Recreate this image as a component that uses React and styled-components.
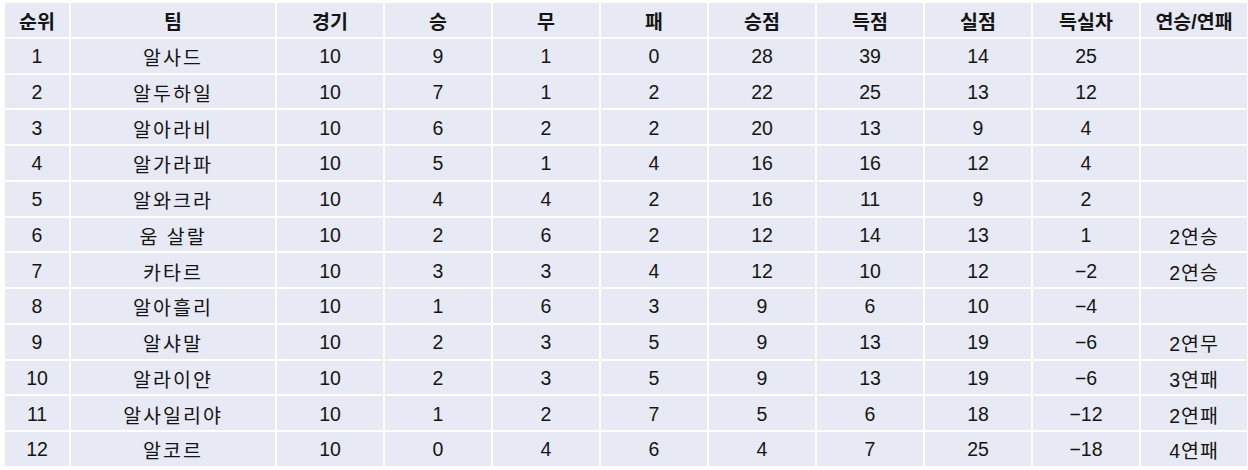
import React from "react";
import styled, { createGlobalStyle } from "styled-components";

const GlobalStyle = createGlobalStyle`
  html, body {
    margin: 0;
    padding: 0;
    background: #ffffff;
  }
`;

const Page = styled.div`
  padding: 3px 0 0 5px;
  font-family: "Liberation Sans", Arial, "Noto Sans CJK KR", sans-serif;
  color: #151515;
`;

const Standings = styled.div`
  display: grid;
  grid-template-columns: 64px 204px repeat(9, 106px);
  grid-auto-rows: 33.75px;
  gap: 2px;
`;

const Cell = styled.div`
  display: flex;
  align-items: center;
  justify-content: center;
  background: #e7e9f4;
  font-size: 19.5px;
  font-weight: ${(p) => (p.$head ? 700 : 400)};
  padding-top: 2px;
  white-space: nowrap;
`;

const Hangul = styled.span`
  letter-spacing: ${(p) => (p.$wide ? "2px" : "1px")};
`;

const headers = ["순위", "팀", "경기", "승", "무", "패", "승점", "득점", "실점", "득실차", "연승/연패"];

// 팀, 경기, 승, 무, 패, 승점, 득점, 실점, 득실차, 연승/연패
const rows = [
  ["알사드", 10, 9, 1, 0, 28, 39, 14, 25, ""],
  ["알두하일", 10, 7, 1, 2, 22, 25, 13, 12, ""],
  ["알아라비", 10, 6, 2, 2, 20, 13, 9, 4, ""],
  ["알가라파", 10, 5, 1, 4, 16, 16, 12, 4, ""],
  ["알와크라", 10, 4, 4, 2, 16, 11, 9, 2, ""],
  ["움 살랄", 10, 2, 6, 2, 12, 14, 13, 1, "2연승"],
  ["카타르", 10, 3, 3, 4, 12, 10, 12, -2, "2연승"],
  ["알아흘리", 10, 1, 6, 3, 9, 6, 10, -4, ""],
  ["알샤말", 10, 2, 3, 5, 9, 13, 19, -6, "2연무"],
  ["알라이얀", 10, 2, 3, 5, 9, 13, 19, -6, "3연패"],
  ["알사일리야", 10, 1, 2, 7, 5, 6, 18, -12, "2연패"],
  ["알코르", 10, 0, 4, 6, 4, 7, 25, -18, "4연패"],
];

const fmt = (v) => {
  if (typeof v === "number") return v < 0 ? `\u2212${Math.abs(v)}` : v;
  return v ? <Hangul>{v}</Hangul> : v;
};

function App() {
  return (
    <Page>
      <GlobalStyle />
      <Standings>
        {headers.map((h) => (
          <Cell key={h} $head>
            {h}
          </Cell>
        ))}
        {rows.map((r, i) => (
          <React.Fragment key={r[0]}>
            <Cell>{i + 1}</Cell>
            <Cell>
              <Hangul $wide>{r[0]}</Hangul>
            </Cell>
            {r.slice(1).map((v, j) => (
              <Cell key={j}>{fmt(v)}</Cell>
            ))}
          </React.Fragment>
        ))}
      </Standings>
    </Page>
  );
}

export default App;
